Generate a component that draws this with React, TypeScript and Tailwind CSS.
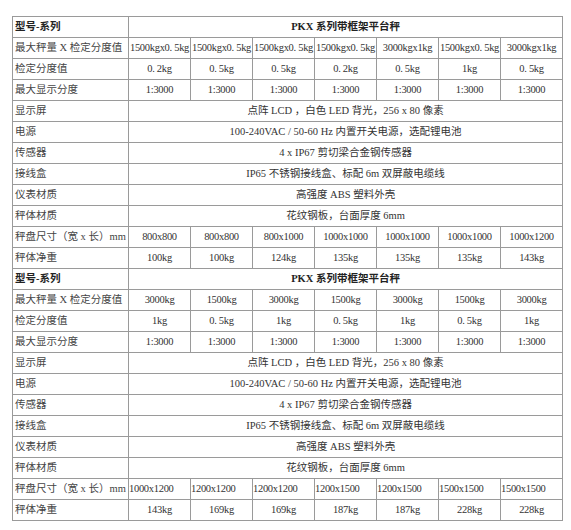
const FONT = { fontFamily: '"Liberation Serif", "Noto Sans CJK SC", serif' };

type Row = { label: string; cells?: string[]; merged?: string; bold?: boolean; left?: boolean };

const common: Row[] = [
  { label: '显示屏', merged: '点阵 LCD ，白色 LED 背光，256 x 80 像素' },
  { label: '电源', merged: '100-240VAC / 50-60 Hz 内置开关电源，选配锂电池' },
  { label: '传感器', merged: '4 x IP67 剪切梁合金钢传感器' },
  { label: '接线盒', merged: 'IP65 不锈钢接线盒、标配 6m 双屏蔽电缆线' },
  { label: '仪表材质', merged: '高强度 ABS 塑料外壳' },
  { label: '秤体材质', merged: '花纹钢板，台面厚度 6mm' },
];

const rows: Row[] = [
  { label: '型号-系列', merged: 'PKX 系列带框架平台秤', bold: true },
  {
    label: '最大秤量 X 检定分度值',
    cells: ['1500kgx0. 5kg', '1500kgx0. 5kg', '1500kgx0. 5kg', '1500kgx0. 5kg', '3000kgx1kg', '1500kgx0. 5kg', '3000kgx1kg'],
  },
  { label: '检定分度值', cells: ['0. 2kg', '0. 5kg', '0. 5kg', '0. 2kg', '0. 5kg', '1kg', '0. 5kg'] },
  { label: '最大显示分度', cells: Array(7).fill('1:3000') },
  ...common,
  { label: '秤盘尺寸（宽 x 长）mm', cells: ['800x800', '800x800', '800x1000', '1000x1000', '1000x1000', '1000x1000', '1000x1200'] },
  { label: '秤体净重', cells: ['100kg', '100kg', '124kg', '135kg', '135kg', '135kg', '143kg'] },
  { label: '型号-系列', merged: 'PKX 系列带框架平台秤', bold: true },
  { label: '最大秤量 X 检定分度值', cells: ['3000kg', '1500kg', '3000kg', '1500kg', '3000kg', '1500kg', '3000kg'] },
  { label: '检定分度值', cells: ['1kg', '0. 5kg', '1kg', '0. 5kg', '1kg', '0. 5kg', '1kg'] },
  { label: '最大显示分度', cells: Array(7).fill('1:3000') },
  ...common,
  {
    label: '秤盘尺寸（宽 x 长）mm',
    cells: ['1000x1200', '1200x1200', '1200x1200', '1200x1500', '1200x1500', '1500x1500', '1500x1500'],
    left: true,
  },
  { label: '秤体净重', cells: ['143kg', '169kg', '169kg', '187kg', '187kg', '228kg', '228kg'] },
];

export default function App() {
  return (
    <div className="w-[571px] h-[530px] bg-white pt-[16px] pl-[12px]" style={FONT}>
      <table className="w-[551px] border-collapse table-fixed text-[10.5px] text-[#333]">
        <colgroup>
          <col className="w-[116px]" />
          {Array.from({ length: 7 }).map((_, i) => (
            <col key={i} className="w-[62px]" />
          ))}
        </colgroup>
        <tbody>
          {rows.map((row, i) => (
            <tr key={i} className="h-[21px]">
              <td
                className={`border border-[#9a9a9a] pl-[2px] pr-0 py-0 whitespace-nowrap overflow-hidden text-left leading-none ${
                  row.bold ? 'font-bold text-[#222]' : 'text-[#444]'
                }`}
              >
                {row.label}
              </td>
              {row.merged ? (
                <td
                  colSpan={7}
                  className={`border border-[#9a9a9a] p-0 text-center whitespace-nowrap leading-none ${
                    row.bold ? 'font-bold text-[#222]' : ''
                  }`}
                >
                  {row.merged}
                </td>
              ) : (
                row.cells!.map((c, j) => (
                  <td
                    key={j}
                    className={`border border-[#9a9a9a] p-0 whitespace-nowrap overflow-hidden leading-none tracking-[-0.3px] ${
                      row.left ? 'text-left' : 'text-center'
                    }`}
                  >
                    {c}
                  </td>
                ))
              )}
            </tr>
          ))}
        </tbody>
      </table>
    </div>
  );
}
